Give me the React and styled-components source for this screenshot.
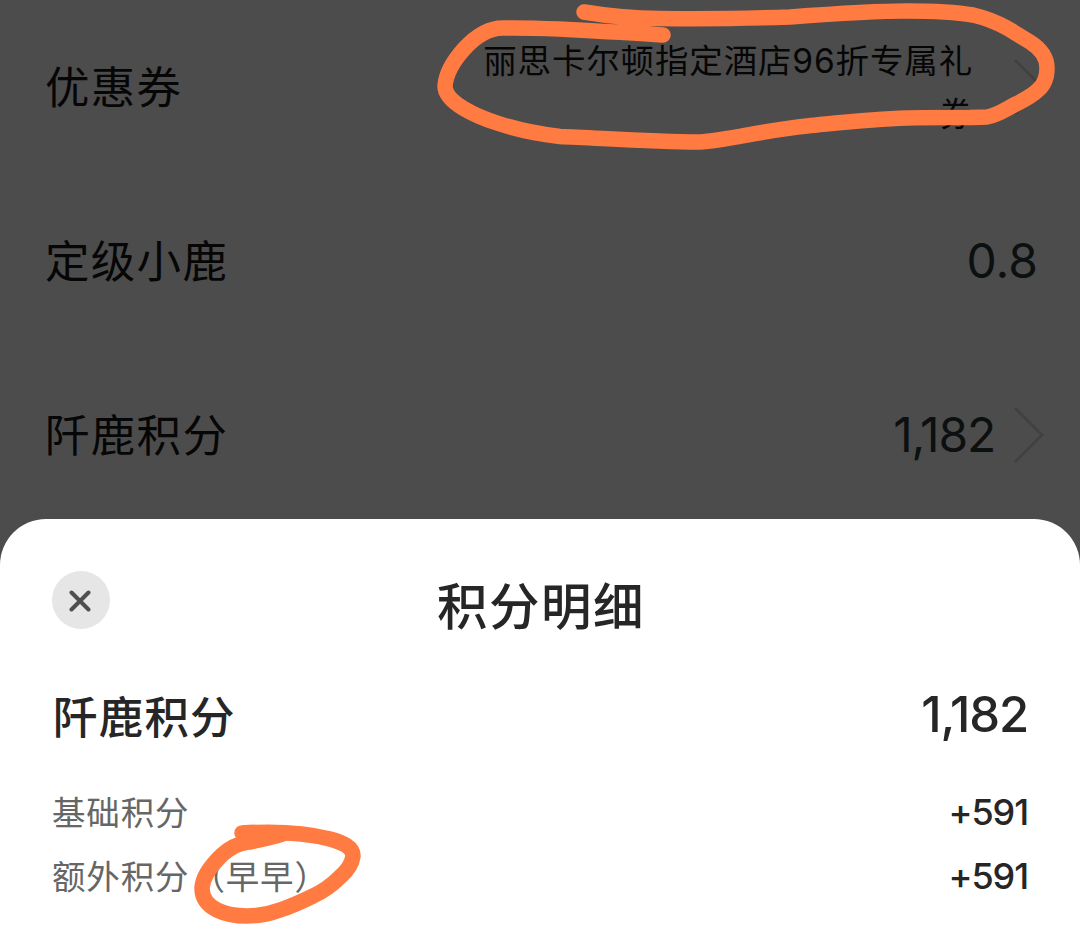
import React from 'react';
import styled, { createGlobalStyle } from 'styled-components';

const GlobalStyle = createGlobalStyle`
  * {
    box-sizing: border-box;
  }

  body {
    margin: 0;
    background-color: #4c4c4c;
    font-family: Inter, "Noto Sans CJK SC", sans-serif;
  }
`;

const Screen = styled.div`
  position: relative;
  width: 1080px;
  height: 948px;
  overflow: hidden;
  background-color: #4c4c4c;
`;

const List = styled.div`
  height: 519px;
  overflow: hidden;
`;

const ListRow = styled.div`
  display: flex;
  align-items: center;
  height: 174px;
  padding: 0 35px 0 45px;
  color: #060606;
`;

const ListLabel = styled.div`
  flex: 1;
  padding-top: 1px;
  font-size: 44.5px;
  letter-spacing: 1.3px;
  line-height: 60px;
`;

const ListValue = styled.div`
  font-size: 48px;
  line-height: 60px;
  letter-spacing: ${(props) => props.$spacing || '0'};
  margin-right: ${(props) => props.$gap || '0'};
  color: #0d1010;
`;

const Coupon = styled.div`
  width: 494px;
  padding-top: 2px;
  margin-right: 40px;
  font-size: 33.5px;
  line-height: 53px;
  letter-spacing: 0.85px;
  text-align: right;
`;

const Arrow = styled.svg`
  flex: none;
  width: 32px;
  height: 58px;
  fill: none;
  stroke: #414141;
  stroke-width: 3;
`;

const Sheet = styled.section`
  position: absolute;
  left: 0;
  right: 0;
  bottom: 0;
  height: 429px;
  padding: 52px 52px 0;
  border-radius: 46px 46px 0 0;
  background-color: #fff;
  color: #262626;
`;

const SheetHeader = styled.header`
  display: grid;
  grid-template-columns: 58px 1fr 58px;
  align-items: start;
  height: 106px;
`;

const CloseButton = styled.button`
  display: flex;
  align-items: center;
  justify-content: center;
  width: 58px;
  height: 58px;
  padding: 2px 2px 0 0;
  border: 0;
  border-radius: 50%;
  background-color: #e6e6e6;
  cursor: pointer;
`;

const Title = styled.h1`
  margin: 0;
  padding: 1px 0 0 2px;
  font-size: 50.5px;
  font-weight: 500;
  line-height: 70px;
  letter-spacing: 1.5px;
  text-align: center;
`;

const TotalRow = styled.div`
  display: flex;
  align-items: center;
  justify-content: space-between;
  height: 74px;
  font-size: 44.5px;
  font-weight: 500;
  letter-spacing: 1.2px;
  padding-left: 1px;
`;

const TotalValue = styled.span`
  padding-top: 1px;
  font-size: 49px;
  letter-spacing: -1.1px;
`;

const DetailList = styled.div`
  padding-top: 28px;
`;

const DetailRow = styled.div`
  display: flex;
  align-items: center;
  justify-content: space-between;
  height: 64px;
`;

const DetailLabel = styled.span`
  padding-bottom: 2px;
  font-size: 33.5px;
  letter-spacing: 0.85px;
  color: #666;
`;

const DetailNote = styled.span`
  margin-left: 2px;
`;

const DetailValue = styled.span`
  padding-top: 2px;
  font-size: 36px;
  font-weight: 500;
  letter-spacing: -1.1px;
`;

// pen marks drawn over the page
const Marks = styled.svg`
  position: absolute;
  top: 0;
  left: 0;
  fill: none;
  stroke: #ff7b42;
  stroke-width: 15.5;
  stroke-linecap: round;
  stroke-linejoin: round;
  pointer-events: none;
`;

const Chevron = () => (
  <Arrow viewBox="0 0 32 58">
    <path d="M2 2L29 29L2 56" />
  </Arrow>
);

const details = [
  { label: '基础积分', value: '+591' },
  { label: '额外积分', note: '（早早）', value: '+591' },
];

const App = () => {
  return (
    <>
      <GlobalStyle />
      <Screen>
        <List>
          <ListRow>
            <ListLabel>优惠券</ListLabel>
            <Coupon>丽思卡尔顿指定酒店96折专属礼券</Coupon>
            <Chevron />
          </ListRow>
          <ListRow>
            <ListLabel>定级小鹿</ListLabel>
            <ListValue $gap="7px">0.8</ListValue>
          </ListRow>
          <ListRow>
            <ListLabel>阡鹿积分</ListLabel>
            <ListValue $gap="18px" $spacing="-1.2px">1,182</ListValue>
            <Chevron />
          </ListRow>
        </List>

        <Sheet>
          <SheetHeader>
            <CloseButton aria-label="关闭">
              <svg width="22" height="22" viewBox="0 0 22 22" stroke="#505050" strokeWidth="4" strokeLinecap="round">
                <path d="M2.5 2.5L19.5 19.5M19.5 2.5L2.5 19.5" />
              </svg>
            </CloseButton>
            <Title>积分明细</Title>
          </SheetHeader>
          <TotalRow>
            <span>阡鹿积分</span>
            <TotalValue>1,182</TotalValue>
          </TotalRow>
          <DetailList>
            {details.map((item) => (
              <DetailRow key={item.label}>
                <DetailLabel>
                  {item.label}
                  {item.note && <DetailNote>{item.note}</DetailNote>}
                </DetailLabel>
                <DetailValue>{item.value}</DetailValue>
              </DetailRow>
            ))}
          </DetailList>
        </Sheet>

        <Marks width="1080" height="948" viewBox="0 0 1080 948">
          <path d="M584 12C608 16 632 18.500 660 18.500C710 19 750 18.500 790 17C830 14 870 11 907 11C930 11 955 12 973 15C986 18 996 22 1007 28L1030 42C1041 49 1047 57 1047 68C1047 78 1044 85 1038 90C1032 96 1024 100 1016 104C1006 109 998 115 987 117C965 118 935 117 907 118C870 119 838 123 807 126C765 130 725 141 700 142C650 142 600 138 560 136.500C538 134 518 130 497 123C478 117 445 103 445 86C446 73 455 59 464 49C474 38 487 28 503 28C555 27 608 32 663 35" />
          <path d="M242 833C275 831 307 833 330 839C344 843 353 847 353 856C352 864 347 871 340 877C332 885 324 891 313 896C303 901 292 906 280 910C269 914 258 916 247 916C236 916 225 914 217 910C207 905 202 898 202 888C203 877 209 869 217 860C224 852 231 847 240 844L264 838" />
          <path d="M240 840L286 832L289 840C275 845 262 847 250 850Z" fill="#ff7b42" stroke="none" />
        </Marks>
      </Screen>
    </>
  );
};

export default App;
